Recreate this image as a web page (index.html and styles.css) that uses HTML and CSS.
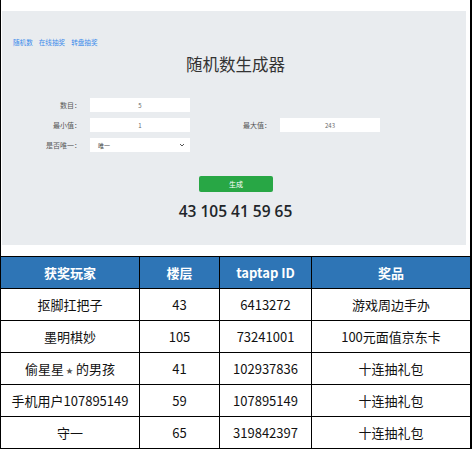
FILE: index.html
```html
<!DOCTYPE html>
<html lang="zh">
<head>
<meta charset="utf-8">
<link rel="stylesheet" href="styles.css">
</head>
<body>
<div class="page">
  <section class="panel">
    <nav class="links">
      <a href="#">随机数</a>
      <a href="#">在线抽奖</a>
      <a href="#">转盘抽奖</a>
    </nav>
    <h1 class="title">随机数生成器</h1>
    <div class="form">
      <div class="row">
        <div class="field"><label class="lbl">数目：</label><div class="input">5</div></div>
      </div>
      <div class="row">
        <div class="field"><label class="lbl">最小值：</label><div class="input">1</div></div>
        <div class="field"><label class="lbl">最大值：</label><div class="input">243</div></div>
      </div>
      <div class="row">
        <div class="field"><label class="lbl">是否唯一：</label><div class="select"><span>唯一</span><svg width="6" height="4" viewBox="0 0 6 4"><path d="M1 1 L3 3 L5 1" fill="none" stroke="#555" stroke-width="1"/></svg></div></div>
      </div>
    </div>
    <div class="btnwrap"><button class="btn">生成</button></div>
    <div class="result">43 105 41 59 65</div>
  </section>
  <table class="winners">
    <thead>
      <tr><th class="c1">获奖玩家</th><th class="c2">楼层</th><th class="c3">taptap ID</th><th class="c4">奖品</th></tr>
    </thead>
    <tbody>
      <tr><td>抠脚扛把子</td><td>43</td><td>6413272</td><td>游戏周边手办</td></tr>
      <tr><td>墨明棋妙</td><td>105</td><td>73241001</td><td>100元面值京东卡</td></tr>
      <tr><td>偷星星<span class="star">★</span> 的男孩</td><td>41</td><td>102937836</td><td>十连抽礼包</td></tr>
      <tr><td>手机用户107895149</td><td>59</td><td>107895149</td><td>十连抽礼包</td></tr>
      <tr><td>守一</td><td>65</td><td>319842397</td><td>十连抽礼包</td></tr>
    </tbody>
  </table>
</div>
</body>
</html>
```
FILE: styles.css
```css
* { box-sizing: border-box; }
html, body { margin: 0; padding: 0; background: #fff; }
body { font-family: "Noto Sans CJK SC", "Open Sans", sans-serif; color: #212529; }
.page { width: 472px; height: 449px; padding-top: 11px; border-left: 1px solid #000; border-right: 2px solid #000; overflow: hidden; }
.panel { background: #e9ecef; margin: 0 4px 0 1px; height: 234px; padding-top: 26px; }
.links { display: flex; gap: 6px; padding-left: 11px; height: 10px; align-items: center; }
.links a { font-size: 6.6px; color: #3b8beb; text-decoration: none; line-height: 10px; }
.title { margin: 5px 0 0; text-align: center; font-size: 16.5px; font-weight: 400; color: #333; line-height: 24px; padding-left: 3px; }
.form { margin-top: 22px; display: flex; flex-direction: column; gap: 6px; }
.row { display: flex; height: 14px; }
.field { display: flex; align-items: center; width: 190px; }
.lbl { width: 79px; text-align: right; font-size: 7px; color: #555; margin-right: 9px; flex-shrink: 0; }
.input { width: 100px; height: 14px; background: #fff; font-size: 6px; color: #666; display: flex; align-items: center; justify-content: center; }
.select { width: 100px; height: 14px; background: #fff; font-size: 6px; color: #444; display: flex; align-items: center; justify-content: space-between; padding: 0 5px 0 8px; }
.btnwrap { display: flex; justify-content: center; margin-top: 24px; padding-left: 4px; }
.btn { width: 74px; height: 16px; background: #28a745; border: none; border-radius: 2px; color: #fff; font-family: inherit; font-size: 7px; padding: 0; }
.result { text-align: center; font-family: "Open Sans", sans-serif; font-weight: 600; font-size: 15.5px; color: #212529; margin-top: 8px; line-height: 22px; padding-left: 3px; }
.winners { border-collapse: collapse; margin-top: 11px; margin-left: -1px; width: 470px; table-layout: fixed; font-size: 13px; }
.winners th, .winners td { border: 1px solid #000; text-align: center; height: 32px; padding: 0; }
.winners th { background: #2e75b6; color: #fff; font-weight: 700; }
.winners td { color: #111; }
.c1 { width: 139px; }
.c2 { width: 80px; }
.c3 { width: 92px; }
.c4 { width: 159px; }
.star { font-size: 7px; color: #555; margin-left: 2px; vertical-align: 1px; }
```
